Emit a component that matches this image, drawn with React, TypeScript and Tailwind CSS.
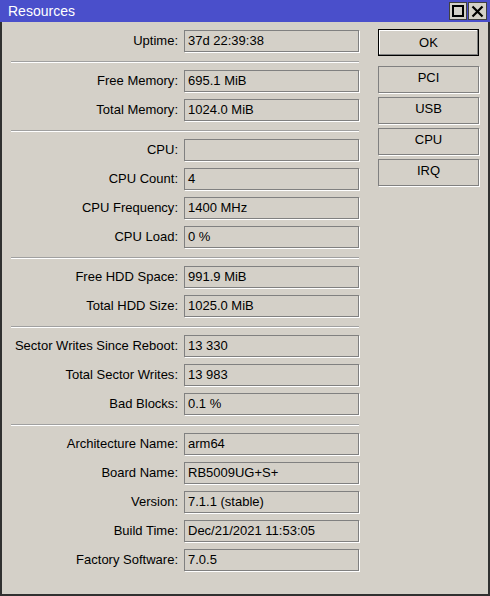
import React from 'react';

type Row = { label: string; value: string };

const sections: Row[][] = [
  [{ label: 'Uptime', value: '37d 22:39:38' }],
  [
    { label: 'Free Memory', value: '695.1 MiB' },
    { label: 'Total Memory', value: '1024.0 MiB' },
  ],
  [
    { label: 'CPU', value: '' },
    { label: 'CPU Count', value: '4' },
    { label: 'CPU Frequency', value: '1400 MHz' },
    { label: 'CPU Load', value: '0 %' },
  ],
  [
    { label: 'Free HDD Space', value: '991.9 MiB' },
    { label: 'Total HDD Size', value: '1025.0 MiB' },
  ],
  [
    { label: 'Sector Writes Since Reboot', value: '13 330' },
    { label: 'Total Sector Writes', value: '13 983' },
    { label: 'Bad Blocks', value: '0.1 %' },
  ],
  [
    { label: 'Architecture Name', value: 'arm64' },
    { label: 'Board Name', value: 'RB5009UG+S+' },
    { label: 'Version', value: '7.1.1 (stable)' },
    { label: 'Build Time', value: 'Dec/21/2021 11:53:05' },
    { label: 'Factory Software', value: '7.0.5' },
  ],
];

function Field({ label, value }: Row) {
  return (
    <div className="flex h-[22px] items-center">
      <div className="w-[173px] text-right pr-[6px] whitespace-nowrap">{label}:</div>
      <div className="h-[22px] w-[175px] border border-[#808080] shadow-[1px_1px_0_#ffffff] flex items-center px-[3px] whitespace-nowrap">
        {value}
      </div>
    </div>
  );
}

function Separator() {
  return <div className="mt-[2px] h-[2px] w-[348px] border-t border-[#a0a0a0] border-b border-b-white" />;
}

function SideButton({ text, primary }: { text: string; primary?: boolean }) {
  return (
    <button
      className={
        primary
          ? 'h-[27px] w-[101px] border border-black bg-[#d4d0c8] shadow-[inset_-1px_-1px_0_#808080,inset_1px_1px_0_#ffffff]'
          : 'h-[27px] w-[101px] border border-[#808080] bg-[#d4d0c8] shadow-[1px_1px_0_#ffffff] pb-[3px]'
      }
    >
      {text}
    </button>
  );
}

export default function App() {
  return (
    <div
      className="w-[490px] h-[596px] bg-[#d4d0c8] text-[13px] text-black flex flex-col"
      style={{ fontFamily: '"Liberation Sans", Arial, sans-serif' }}
    >
      <div className="h-[22px] bg-[#4a4fcb] flex items-center justify-between pl-[8px] pr-[3px]">
        <span className="text-white text-[14px]">Resources</span>
        <div className="flex gap-[1px]">
          <div className="h-[18px] w-[18px] bg-[#d4d0c8] border border-[#404040] flex items-center justify-center">
            <div className="h-[12px] w-[12px] border-[2px] border-black" />
          </div>
          <div className="h-[18px] w-[19px] bg-[#d4d0c8] border border-[#404040] flex items-center justify-center">
            <svg width="13" height="13" viewBox="0 0 13 13">
              <path d="M1.5 1.5 L11.5 11.5 M11.5 1.5 L1.5 11.5" stroke="black" strokeWidth="2.2" />
            </svg>
          </div>
        </div>
      </div>

      <div className="flex-1 flex border-l-2 border-r-2 border-b-2 border-[#303030]">
        <div className="flex flex-col gap-[7px] pt-[8px] pl-[9px]">
          {sections.map((rows, i) => (
            <React.Fragment key={i}>
              {i > 0 && <Separator />}
              {rows.map((r) => (
                <Field key={r.label} {...r} />
              ))}
            </React.Fragment>
          ))}
        </div>
        <div className="flex flex-col gap-[4px] pt-[7px] ml-[19px]">
          <div className="mb-[6px]">
            <SideButton text="OK" primary />
          </div>
          <SideButton text="PCI" />
          <SideButton text="USB" />
          <SideButton text="CPU" />
          <SideButton text="IRQ" />
        </div>
      </div>
    </div>
  );
}
